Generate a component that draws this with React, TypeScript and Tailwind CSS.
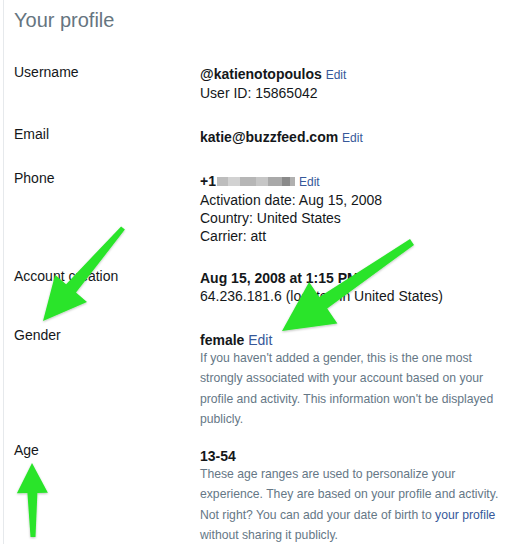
import React from "react";

type Pt = [number, number];

function arrowPoints(t: Pt, p: Pt, tailW: number, shaftW: number, headW: number, headLen: number) {
  const dx = p[0] - t[0];
  const dy = p[1] - t[1];
  const len = Math.hypot(dx, dy);
  const d = [dx / len, dy / len];
  const n = [-d[1], d[0]];
  const b = [p[0] - d[0] * headLen, p[1] - d[1] * headLen];
  const pts: Pt[] = [
    [t[0] + n[0] * tailW, t[1] + n[1] * tailW],
    [b[0] + n[0] * shaftW, b[1] + n[1] * shaftW],
    [b[0] + n[0] * headW, b[1] + n[1] * headW],
    p,
    [b[0] - n[0] * headW, b[1] - n[1] * headW],
    [b[0] - n[0] * shaftW, b[1] - n[1] * shaftW],
    [t[0] - n[0] * tailW, t[1] - n[1] * tailW],
  ];
  return pts.map((q) => `${q[0].toFixed(1)},${q[1].toFixed(1)}`).join(" ");
}

function Edit({ small = true }: { small?: boolean }) {
  return <span className={`${small ? "text-[12px]" : "text-[14px]"} font-normal text-[#365899]`}>Edit</span>;
}

function Row({ label, labelClass, className, lead = "leading-[18.5px]", children }: { label: string; labelClass: string; className: string; lead?: string; children: React.ReactNode }) {
  return (
    <div className={`flex ${className}`}>
      <div className={`w-[186px] shrink-0 text-[14px] leading-[16px] text-[#14171a] ${labelClass}`}>{label}</div>
      <div className={`w-[300px] text-[14px] text-[#14171a] ${lead}`}>{children}</div>
    </div>
  );
}

export default function App() {
  return (
    <div className="relative w-[520px] h-[544px] overflow-hidden bg-white font-['Liberation_Sans',Arial,sans-serif]">
      <div className="ml-[3px] h-full border-l border-[#e6e9ec] pl-[10px]">
        <h1 className="pt-[8px] text-[20px] leading-[24px] text-[#66757f]">Your profile</h1>

        <Row label="Username" labelClass="-mt-[1px]" className="mt-[32.5px]">
          <div>
            <span className="font-bold">@katienotopoulos</span> <Edit />
          </div>
          <div>User ID: 15865042</div>
        </Row>

        <Row label="Email" labelClass="-mt-[2px]" className="mt-[25px]">
          <div>
            <span className="font-bold">katie@buzzfeed.com</span> <Edit />
          </div>
        </Row>

        <Row label="Phone" labelClass="-mt-[2px]" className="mt-[24.5px]" lead="leading-[18px]">
          <div className="flex items-center">
            <span className="font-bold">+1</span>
            <span className="ml-[1px] flex h-[9px] blur-[0.6px]">
              <span className="w-[11px] bg-[#bdbdbd]" />
              <span className="w-[12px] bg-[#d2d2d2]" />
              <span className="w-[16px] bg-[#b6b6b6]" />
              <span className="w-[12px] bg-[#c6c6c6]" />
              <span className="w-[14px] bg-[#a9a9a9]" />
              <span className="w-[8px] bg-[#8a8a8a]" />
              <span className="w-[5px] bg-[#b0b0b0]" />
            </span>
            <span className="ml-[4px]">
              <Edit />
            </span>
          </div>
          <div>Activation date: Aug 15, 2008</div>
          <div>Country: United States</div>
          <div>Carrier: att</div>
        </Row>

        <Row label="Account creation" labelClass="-mt-[1px]" className="mt-[24px]">
          <div className="font-bold">Aug 15, 2008 at 1:15 PM</div>
          <div>64.236.181.6 (located in United States)</div>
        </Row>

        <Row label="Gender" labelClass="-mt-[5px]" className="mt-[26px]">
          <div className="leading-[16px]">
            <span className="font-bold">female</span> <Edit small={false} />
          </div>
          <p className="text-[12.2px] leading-[20.5px] text-[#657786]">
            If you haven't added a gender, this is the one most strongly associated with your account based on your
            profile and activity. This information won't be displayed publicly.
          </p>
        </Row>

        <Row label="Age" labelClass="-mt-[6px]" className="mt-[18px]">
          <div className="leading-[16px] font-bold">13-54</div>
          <p className="text-[12.2px] leading-[20.5px] text-[#657786]">
            These age ranges are used to personalize your experience. They are based on your profile and activity.
            Not right? You can add your date of birth to <span className="text-[#365899]">your profile</span> without
            sharing it publicly.
          </p>
        </Row>
      </div>

      <svg className="pointer-events-none absolute inset-0" width="520" height="544" viewBox="0 0 520 544">
        <defs>
          <filter id="sh" x="-20%" y="-20%" width="140%" height="140%">
            <feDropShadow dx="0" dy="1" stdDeviation="1" floodColor="#000" floodOpacity="0.25" />
          </filter>
        </defs>
        <g fill="#2be42b" filter="url(#sh)">
          <polygon points={arrowPoints([123, 228], [43, 321], 2.5, 6.5, 21, 43)} />
          <polygon points={arrowPoints([412, 242], [282, 331], 3.5, 7, 25, 50)} />
          <polygon points={arrowPoints([33, 537], [32, 463], 2.5, 5, 15.5, 30)} />
        </g>
      </svg>
    </div>
  );
}
